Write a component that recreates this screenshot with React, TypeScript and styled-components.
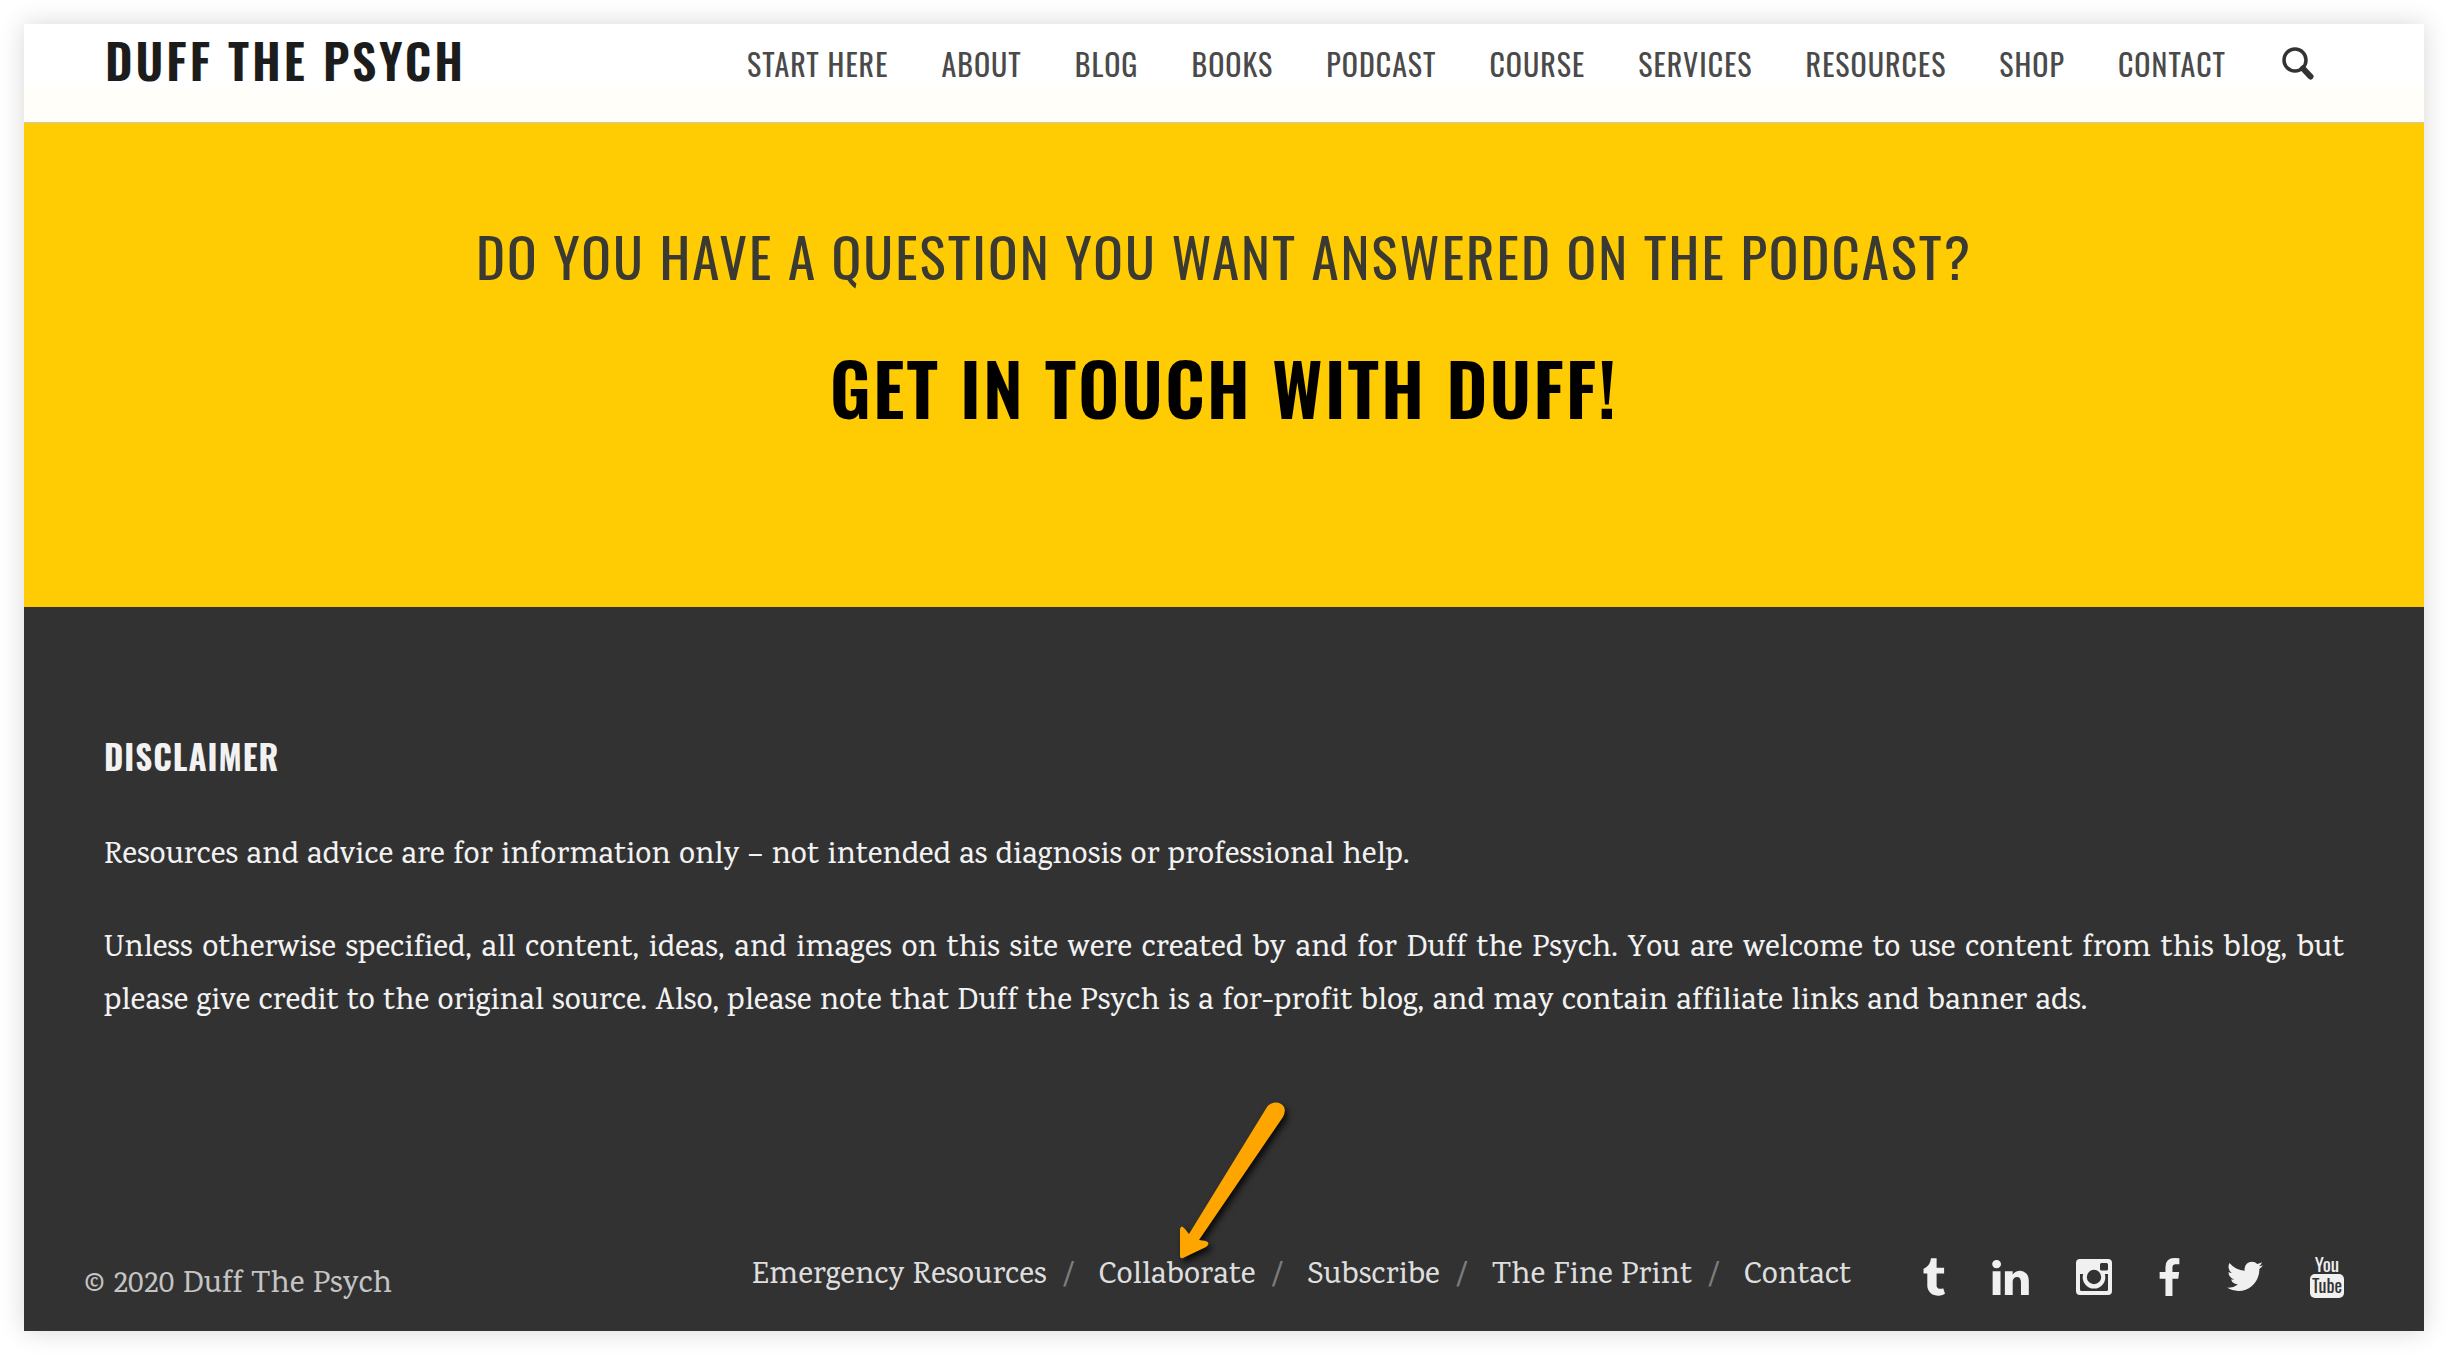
import React from "react";
import styled, { createGlobalStyle } from "styled-components";

const display = `"Oswald", "Roboto Condensed", sans-serif`;
const serif = `"Karma", "Liberation Serif", serif`;

const GlobalStyle = createGlobalStyle`
  *, *::before, *::after { box-sizing: border-box; }
  body { margin: 0; background: #fff; font-family: ${serif}; }
  a { color: inherit; text-decoration: none; }
  h1, h2, p, ul { margin: 0; padding: 0; }
`;

const Site = styled.div`
  margin: 24px;
  box-shadow: 0 0 24px rgba(0, 0, 0, 0.16);
`;

const Header = styled.header`
  display: flex;
  align-items: flex-start;
  justify-content: space-between;
  height: 99px;
  padding: 0 110px 0 81px;
  border-bottom: 1px solid #c9c9c9;
  background: linear-gradient(#fff 64px, #fffef8 64px);
`;

const Logo = styled.a`
  font: 600 48px/72px ${display};
  letter-spacing: 3px;
  color: #1c1c1c;
`;

const NavRow = styled.nav`
  display: flex;
  align-items: center;
  gap: 56px;
  height: 80px;
`;

const Menu = styled.ul`
  display: flex;
  gap: 53px;
  list-style: none;
  font: 400 30px/80px ${display};
  letter-spacing: 1px;
  color: #4a4a4a;
`;

const SearchButton = styled.button`
  display: flex;
  width: 32px;
  height: 34px;
  padding: 0;
  border: 0;
  background: none;
  color: #333;
`;

const Callout = styled.section`
  display: flex;
  flex-direction: column;
  align-items: center;
  gap: 32px;
  height: 484px;
  padding-top: 88px;
  background: #ffcc03;
  text-align: center;
`;

const Question = styled.h1`
  font: 400 55px/88px ${display};
  letter-spacing: 2px;
  color: #3a3a33;
`;

const CallLink = styled.a`
  font: 600 72px/112px ${display};
  letter-spacing: 2px;
  color: #000;
`;

const Footer = styled.footer`
  padding: 120px 80px 17px;
  background: #323232;
  color: #f2f2f2;
`;

const FooterTitle = styled.h2`
  margin-bottom: 44px;
  font: 700 33px/60px ${display};
  letter-spacing: 1px;
  color: #f2f2f2;
`;

const Paragraph = styled.p`
  font-size: 31px;
  font-weight: 500;
  line-height: 53px;
  text-align: justify;

  & + & { margin-top: 40px; }
`;

const BottomBar = styled.div`
  display: flex;
  justify-content: space-between;
  align-items: center;
  margin: 210px 0 0 -20px;
`;

const Copyright = styled.p`
  padding-top: 18px;
  font-size: 31px;
  font-weight: 500;
  line-height: 56px;
  color: #c4c4c4;
`;

const BottomRight = styled.div`
  display: flex;
  align-items: center;
  gap: 71px;
`;

const FooterLinks = styled.ul`
  display: flex;
  list-style: none;
  font-size: 31px;
  font-weight: 500;
  line-height: 56px;
  color: #dedede;

  li + li::before {
    content: "/";
    margin: 0 24px 0 16px;
    color: #7c7c7c;
  }
`;

const Collaborate = styled.span`
  position: relative;
`;

const Arrow = styled.svg`
  position: absolute;
  left: 80px;
  bottom: 30px;
  width: 120px;
  height: 168px;
  filter: drop-shadow(3px 4px 3px rgba(0, 0, 0, 0.8));
`;

const Social = styled.ul`
  display: flex;
  align-items: center;
  gap: 47px;
  list-style: none;
  color: #f0f0f0;

  a, svg { display: block; overflow: visible; }
`;

const NAV = ["Start Here", "About", "Blog", "Books", "Podcast", "Course", "Services", "Resources", "Shop", "Contact"];

function SearchIcon() {
  return (
    <svg viewBox="0 0 32 34" width="32" height="34" fill="none" stroke="currentColor" aria-hidden="true">
      <circle cx="13" cy="13" r="11" strokeWidth="3.500" />
      <path d="M21 21.500 28.500 29.500" strokeWidth="6" strokeLinecap="round" />
    </svg>
  );
}

interface GlyphProps {
  box: string;
  width: number;
  height: number;
  d: string;
}

function Glyph({ box, width, height, d }: GlyphProps) {
  return (
    <svg viewBox={box} width={width} height={height} aria-hidden="true">
      <path fill="currentColor" fillRule="evenodd" d={d} />
    </svg>
  );
}

const YouTubeText = styled.text`
  font-family: ${display};
  text-anchor: middle;
`;

function YouTubeIcon() {
  return (
    <svg viewBox="0 0 34 44" width="34" height="44" aria-hidden="true">
      <YouTubeText x="17" y="17" fontSize="19" fontWeight="400" fill="currentColor">You</YouTubeText>
      <rect y="19" width="34" height="24" rx="5" fill="currentColor" />
      <YouTubeText x="17" y="38" fontSize="18" fontWeight="400" fill="#323232">Tube</YouTubeText>
    </svg>
  );
}

const SOCIAL = [
  {
    name: "Tumblr",
    icon: (
      <Glyph
        box="384 0 1024 1664"
        width={23}
        height={38}
        d="M1328 1329l80 237q-23 35-111 66t-177 32q-104 2-190.500-26t-142.500-74-95-106-55.500-120-16.500-118v-544h-168v-215q72-26 129-69.500t91-90 58-102 34-99 15-88.500q1-5 4.500-8.500t7.500-3.500h244v424h333v252h-334v518q0 30 6.500 56t22.500 52.500 49.500 41.500 81.500 14q78-2 134-29z"
      />
    ),
  },
  {
    name: "LinkedIn",
    icon: (
      <Glyph
        box="128 148 1536 1468"
        width={37}
        height={35}
        d="M477 625v991h-330v-991h330zm21-306q1 73-50.500 122t-135.500 49h-2q-82 0-132-49t-50-122q0-74 51.500-122.500t134.500-48.500 133 48.500 51 122.500zm1166 729v568h-329v-530q0-105-40.500-164.500t-126.500-59.500q-63 0-105.500 34.500t-63.500 85.500q-11 30-11 81v553h-329q2-399 2-647t-1-296l-1-48h329v144h-2q20-32 41-56t56.500-52 87-43.500 114.500-15.500q171 0 275 113.500t104 332.500z"
      />
    ),
  },
  {
    name: "Instagram",
    icon: (
      <Glyph
        box="0 0 36 36"
        width={36}
        height={36}
        d="M4 0H32A4 4 0 0 1 36 4V32A4 4 0 0 1 32 36H4A4 4 0 0 1 0 32V4A4 4 0 0 1 4 0ZM25.500 4A1.500 1.500 0 0 0 24 5.500V10A1.500 1.500 0 0 0 25.500 11.500H30.500A1.500 1.500 0 0 0 32 10V5.500A1.500 1.500 0 0 0 30.500 4ZM4 15V30.500A1.500 1.500 0 0 0 5.500 32H30.500A1.500 1.500 0 0 0 32 30.500V15H28.800A11.300 11.300 0 1 1 7.200 15ZM18 10.800A7.200 7.200 0 1 0 18 25.200A7.200 7.200 0 1 0 18 10.800Z"
      />
    ),
  },
  {
    name: "Facebook",
    icon: (
      <Glyph
        box="479 0 864 1664"
        width={21}
        height={38}
        d="M1343 12v264h-157q-86 0-116 36t-30 108v189h293l-39 296h-254v759h-306v-759h-255v-296h255v-218q0-186 104-288.500t277-102.500q147 0 228 12z"
      />
    ),
  },
  {
    name: "Twitter",
    icon: (
      <Glyph
        box="108 286 1576 1280"
        width={36}
        height={30}
        d="M1684 408q-67 98-162 167 1 14 1 42 0 130-38 259.500t-115.500 248.500-184.500 210.500-258 146-323 54.500q-271 0-496-145 35 4 78 4 225 0 401-138-105-2-188-64.500t-114-159.500q33 5 61 5 43 0 85-11-112-23-185.500-111.500t-73.500-205.500v-4q68 38 146 41-66-44-105-115t-39-154q0-88 44-163 121 149 294.500 238.500t371.500 99.500q-8-38-8-74 0-134 94.500-228.500t228.500-94.500q140 0 236 102 109-21 205-78-37 115-142 178 93-10 186-50z"
      />
    ),
  },
  { name: "YouTube", icon: <YouTubeIcon /> },
];

export default function App() {
  return (
    <>
      <GlobalStyle />
      <Site>
        <Header>
          <Logo href="#">DUFF THE PSYCH</Logo>
          <NavRow aria-label="Main">
            <Menu>
              {NAV.map((item) => (
                <li key={item}><a href="#">{item.toUpperCase()}</a></li>
              ))}
            </Menu>
            <SearchButton type="button" aria-label="Search"><SearchIcon /></SearchButton>
          </NavRow>
        </Header>
        <Callout>
          <Question>DO YOU HAVE A QUESTION YOU WANT ANSWERED ON THE PODCAST?</Question>
          <CallLink href="#">GET IN TOUCH WITH DUFF!</CallLink>
        </Callout>
        <Footer>
          <FooterTitle>DISCLAIMER</FooterTitle>
          <Paragraph>
            Resources and advice are for information only – not intended as diagnosis or professional help.
          </Paragraph>
          <Paragraph>
            Unless otherwise specified, all content, ideas, and images on this site were created by and for Duff the
            Psych. You are welcome to use content from this blog, but please give credit to the original source. Also,
            please note that Duff the Psych is a for-profit blog, and may contain affiliate links and banner ads.
          </Paragraph>
          <BottomBar>
            <Copyright>© 2020 Duff The Psych</Copyright>
            <BottomRight>
              <FooterLinks>
                <li><a href="#">Emergency Resources</a></li>
                <li>
                  <Collaborate>
                    <a href="#">Collaborate</a>
                    <Arrow viewBox="0 0 120 168" aria-hidden="true">
                      <path
                        fill="#ffa500"
                        d="M88 5C92 -1 102 -1 105 5Q107 9 104 15L20 138L27 139Q32 141 27 145L4 156Q1 157 1 154L1 127Q2 122 6 127L10 132Z"
                      />
                    </Arrow>
                  </Collaborate>
                </li>
                <li><a href="#">Subscribe</a></li>
                <li><a href="#">The Fine Print</a></li>
                <li><a href="#">Contact</a></li>
              </FooterLinks>
              <Social>
                {SOCIAL.map(({ name, icon }) => (
                  <li key={name}><a href="#" aria-label={name}>{icon}</a></li>
                ))}
              </Social>
            </BottomRight>
          </BottomBar>
        </Footer>
      </Site>
    </>
  );
}
